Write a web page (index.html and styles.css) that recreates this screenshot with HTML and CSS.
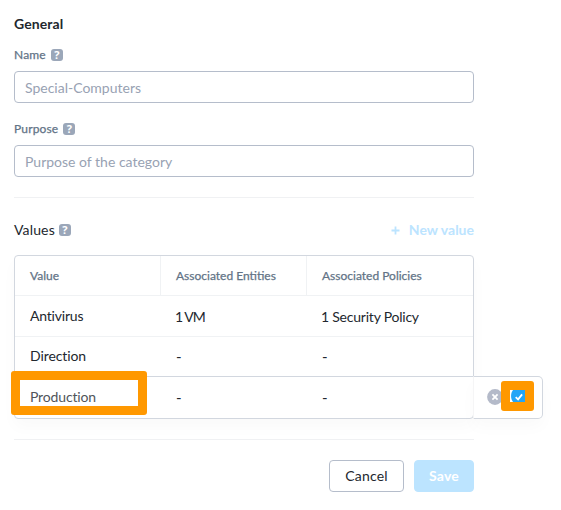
FILE: index.html
```html
<!DOCTYPE html>
<html lang="en">
<head>
<meta charset="utf-8">
<title>Category</title>
<link rel="stylesheet" href="styles.css">
</head>
<body>
<main class="form">
  <h1 class="title"><span class="t-general">General</span></h1>
  <label class="label"><span class="t-name">Name</span><i class="help">?</i></label>
  <div class="input"><span class="t-special">Special-Computers</span></div>
  <label class="label second"><span class="t-purpose">Purpose</span><i class="help">?</i></label>
  <div class="input"><span class="t-category">Purpose of the category</span></div>
  <hr class="rule">
  <div class="values-head">
    <span class="t-values">Values</span><i class="help">?</i>
    <span class="new"><svg width="9" height="9" viewBox="0 0 9 9"><path d="M4.5 .5v8M.5 4.5h8" stroke="currentColor" stroke-width="1.8"/></svg><span class="t-new">New value</span></span>
  </div>
  <section class="table">
    <div class="row head"><div><span class="t-value">Value</span></div><div><span class="t-entities">Associated Entities</span></div><div><span class="t-policies">Associated Policies</span></div></div>
    <div class="row first"><div><span class="t-antivirus">Antivirus</span></div><div class="low"><span class="t-vm">1 VM</span></div><div class="low"><span class="t-security">1 Security Policy</span></div></div>
    <div class="row direction"><div><span class="t-direction">Direction</span></div><div><b class="dash">-</b></div><div><b class="dash">-</b></div></div>
    <div class="row editing"><div><span class="t-production">Production</span></div><div><b class="dash">-</b></div><div><b class="dash">-</b></div>
      <div class="actions">
        <svg class="cancel-icon" width="16" height="16" viewBox="0 0 16 16"><circle cx="8" cy="8" r="7.9" fill="#b4bac9"/><path d="M5.4 5.4l5.2 5.2M10.6 5.4l-5.2 5.2" stroke="#fff" stroke-width="1.8"/></svg>
        <div class="mark mark-check"><svg width="15" height="12" viewBox="0 0 15 12"><path fill="#fff" d="M0 0h15v12H0z"/><path fill="#22a5f7" d="M3 0h12v12H3C.4 8.5.4 3.5 3 0z"/><path d="M5.7 7.1l2.4 2.3 4-5" fill="none" stroke="#fff" stroke-width="1.8"/></svg></div>
      </div>
      <div class="mark mark-name"></div>
    </div>
  </section>
  <hr class="rule bottom">
  <footer class="buttons"><button class="btn"><span class="t-cancel">Cancel</span></button><button class="btn save"><span class="t-save">Save</span></button></footer>
</main>
</body>
</html>
```

FILE: styles.css
```css
* { box-sizing: border-box; }
body { margin: 0; background: #fff; color: #22272e; font: 14px/20px Lato, "Liberation Sans", sans-serif; }
.form { width: 474px; padding: 14px 0 0 14px; }
span { white-space: nowrap; }
.title { margin: 0; font-size: 14px; line-height: 20px; height: 33px; font-weight: 700; letter-spacing: .1px; }
.label { display: flex; align-items: center; gap: 5px; height: 16px; margin-bottom: 8px; color: #627386; font-size: 12px; line-height: 16px; letter-spacing: .15px; -webkit-text-stroke: .25px currentColor; }
.label.second { margin-top: 18px; }
.help { display: inline-flex; justify-content: center; align-items: center; width: 12px; height: 12px; border-radius: 3px; background: #9ba7b9; color: #fff; font: 700 11px/12px "Open Sans", sans-serif; letter-spacing: 0; -webkit-text-stroke: 0; }
.input { display: flex; align-items: center; height: 32px; border: 1px solid #b5bdcb; border-radius: 4px; padding: 2px 10px 0; color: #98a2b3; }
.rule { height: 1px; margin: 20px 0 0; border: 0; background: #f0f1f3; }
.values-head { display: flex; align-items: center; gap: 4px; margin-top: 22px; height: 20px; }
.t-values { margin-top: -1px; letter-spacing: .15px; }
.new { display: flex; align-items: center; gap: 9px; margin-left: auto; color: #bce4ff; font-weight: 700; }
.table { position: relative; height: 164px; margin-top: 15px; border: 1px solid #d2d7df; border-radius: 4px; box-shadow: 0 8px 16px rgba(0,0,0,.025); }
.row { display: grid; grid-template-columns: 145px 146px 1fr; height: 41px; border-bottom: 1px solid #f0f2f4; }
.row > div:not(.actions):not(.mark) { display: flex; align-items: center; padding-left: 15px; }
.head { height: 40px; color: #627386; font-size: 12px; -webkit-text-stroke: .25px currentColor; }
.head > div + div { border-left: 1px solid #f0f2f4; }
.row > .low { padding-top: 2px; }
.t-antivirus { letter-spacing: -.2px; }
.t-vm { letter-spacing: -1px; }
.t-security { letter-spacing: -.22px; }
.t-direction { letter-spacing: -.1px; }
.direction { height: 40px; padding-bottom: 2px; border-color: #d2d7df; }
.editing { position: relative; height: 41px; padding-bottom: 2px; border: 0; }
.dash { width: 5px; height: 20px; margin-left: 1px; font-weight: 400; line-height: 20px; font-size: 15px; }
.t-production { color: #50545a; font-weight: 400; letter-spacing: -.15px; }
.actions { position: absolute; left: 458px; top: -1px; width: 70px; height: 43px; border: 1px solid #d2d7df; border-left-color: #f5f5f6; border-radius: 0 5px 5px 0; background: #fff; box-shadow: 0 8px 16px rgba(0,0,0,.025); }
.cancel-icon { position: absolute; left: 13px; top: 12px; }
.mark { position: absolute; border: 9px solid #ff9800; border-radius: 3px; }
.mark-name { left: -4px; top: -6px; width: 136px; height: 44px; }
.mark-check { left: 27px; top: 4px; width: 33px; height: 30px; }
.mark-check svg { display: block; }
.bottom { margin-top: 20px; }
.buttons { display: flex; justify-content: flex-end; gap: 10px; margin-top: 20px; }
.btn { display: flex; align-items: center; justify-content: center; width: 75px; height: 32px; padding: 0; border: 1px solid #b5bdcb; border-radius: 4px; background: #fff; color: #22272e; font: 14px/20px Lato, sans-serif; letter-spacing: .2px; }
.save { width: 60px; border-color: #bce4ff; background: #bce4ff; color: #fff; font-weight: 700; }
```
